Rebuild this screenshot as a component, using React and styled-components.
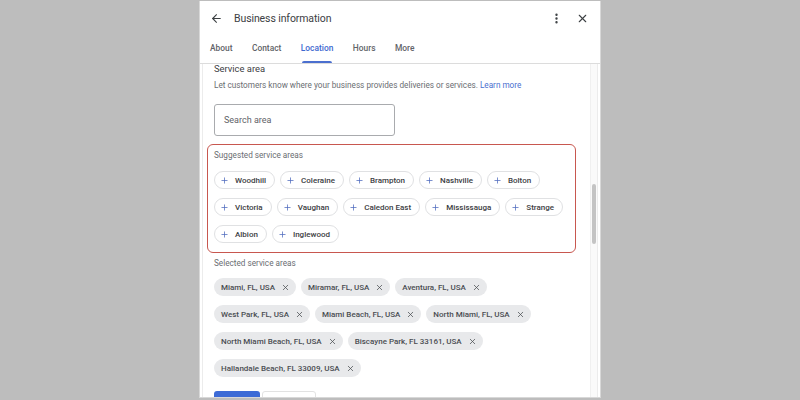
import styled, { createGlobalStyle } from "styled-components";
import { ArrowLeft, EllipsisVertical, X, Plus } from "lucide-react";

const GlobalStyle = createGlobalStyle`
  html, body {
    margin: 0;
    padding: 0;
    background: #bdbdbd;
    font-family: Roboto, "Noto Sans", Arial, sans-serif;
    height: 400px;
    overflow: hidden;
  }
`;

const suggested = [
  ["Woodhill", "Coleraine", "Brampton", "Nashville", "Bolton"],
  ["Victoria", "Vaughan", "Caledon East", "Mississauga", "Strange"],
  ["Albion", "Inglewood"],
];

const selected = [
  ["Miami, FL, USA", "Miramar, FL, USA", "Aventura, FL, USA"],
  ["West Park, FL, USA", "Miami Beach, FL, USA", "North Miami, FL, USA"],
  ["North Miami Beach, FL, USA", "Biscayne Park, FL 33161, USA"],
  ["Hallandale Beach, FL 33009, USA"],
];

const tabs = ["About", "Contact", "Location", "Hours", "More"];

function App() {
  return (
    <>
      <GlobalStyle />
      <Page>
        <Dialog>
          <Header>
            <IconButton>
              <ArrowLeft size={13} strokeWidth={2} />
            </IconButton>
            <Title>Business information</Title>
            <HeaderActions>
              <IconButton>
                <EllipsisVertical size={13} strokeWidth={2.4} />
              </IconButton>
              <IconButton>
                <X size={13} strokeWidth={2} />
              </IconButton>
            </HeaderActions>
          </Header>
          <Tabs>
            {tabs.map((t) => (
              <Tab key={t} $active={t === "Location"}>
                {t}
              </Tab>
            ))}
          </Tabs>
          <Body>
            <Content>
              <SectionTitle>Service area</SectionTitle>
              <Description>
                Let customers know where your business provides deliveries or services.{" "}
                <Link>Learn more</Link>
              </Description>
              <SearchBox>Search area</SearchBox>
              <Highlight>
                <Label>Suggested service areas</Label>
                <ChipRows>
                  {suggested.map((row, i) => (
                    <ChipRow key={i}>
                      {row.map((name) => (
                        <AddChip key={name}>
                          <Plus size={9} strokeWidth={2} color="#4f6bbd" />
                          {name}
                        </AddChip>
                      ))}
                    </ChipRow>
                  ))}
                </ChipRows>
              </Highlight>
              <SelectedLabel>Selected service areas</SelectedLabel>
              <ChipRows>
                {selected.map((row, i) => (
                  <ChipRow key={i}>
                    {row.map((name) => (
                      <SelectedChip key={name}>
                        {name}
                        <X size={9} strokeWidth={2} color="#4a4d52" />
                      </SelectedChip>
                    ))}
                  </ChipRow>
                ))}
              </ChipRows>
              <Footer>
                <PrimaryButton />
                <SecondaryButton />
              </Footer>
            </Content>
            <ScrollTrack>
              <ScrollThumb />
            </ScrollTrack>
          </Body>
        </Dialog>
      </Page>
    </>
  );
}

export default App;

const Page = styled.div`
  height: 400px;
  display: flex;
  justify-content: center;
  padding-top: 1px;
  box-sizing: border-box;
`;

const Dialog = styled.div`
  width: 402px;
  height: 397px;
  background: #fff;
  border: 1px solid #d8d8d8;
  border-top: none;
  display: flex;
  flex-direction: column;
  box-sizing: border-box;
  overflow: hidden;
`;

const Header = styled.div`
  height: 35px;
  display: flex;
  align-items: center;
  padding: 0 10px 0 8px;
  color: #3c4043;
`;

const IconButton = styled.div`
  width: 16px;
  height: 16px;
  display: flex;
  align-items: center;
  justify-content: center;
  color: #3c4043;
`;

const Title = styled.div`
  font-size: 10.5px;
  margin-left: 10px;
  color: #3c4043;
  letter-spacing: -0.1px;
`;

const HeaderActions = styled.div`
  margin-left: auto;
  display: flex;
  gap: 10px;
`;

const Tabs = styled.div`
  height: 27px;
  display: flex;
  align-items: stretch;
  padding-left: 10px;
  gap: 19.5px;
  border-bottom: 1px solid #dcdcdc;
`;

const Tab = styled.div`
  position: relative;
  display: flex;
  align-items: center;
  padding-bottom: 3px;
  font-size: 8.4px;
  font-weight: 500;
  color: ${(p) => (p.$active ? "#3d68d0" : "#5f6368")};

  &::after {
    content: "";
    display: ${(p) => (p.$active ? "block" : "none")};
    position: absolute;
    left: 1px;
    right: 1px;
    bottom: 0;
    height: 2px;
    border-radius: 2px 2px 0 0;
    background: #4b6fcf;
  }
`;

const Body = styled.div`
  position: relative;
  flex: 1;
  overflow: hidden;
  margin: 0 2px;
  border-left: 1px solid #ececec;
  border-right: 1px solid #ececec;
`;

const Content = styled.div`
  padding: 0 12px 0 11px;
  display: flex;
  flex-direction: column;
`;

const SectionTitle = styled.div`
  font-size: 9.4px;
  color: #3c4043;
  margin-top: -1px;
  line-height: 12px;
`;

const Description = styled.div`
  font-size: 8.2px;
  color: #6a6d72;
  margin-top: 5px;
  line-height: 10px;
`;

const Link = styled.span`
  color: #4a6fcf;
`;

const SearchBox = styled.div`
  margin-top: 14px;
  width: 181px;
  height: 32px;
  box-sizing: border-box;
  border: 1px solid #a9abae;
  border-radius: 3px;
  display: flex;
  align-items: center;
  padding-left: 9px;
  font-size: 9px;
  color: #5f6368;
`;

const Highlight = styled.div`
  margin: 8px 0 0 -7px;
  width: 369px;
  height: 109px;
  box-sizing: border-box;
  border: 1.5px solid #c8574f;
  border-radius: 6px;
  padding: 5px 0 0 6px;
`;

const Label = styled.div`
  font-size: 8.2px;
  color: #6a6d72;
  line-height: 10px;
  margin-bottom: 11px;
`;

const ChipRows = styled.div`
  display: flex;
  flex-direction: column;
  gap: 9px;
`;

const ChipRow = styled.div`
  display: flex;
  gap: 5px;
`;

const AddChip = styled.div`
  height: 18px;
  box-sizing: border-box;
  border: 1px solid #e0e1e3;
  border-radius: 9px;
  display: flex;
  align-items: center;
  gap: 6px;
  padding: 0 8px 0 5px;
  font-size: 8px;
  font-weight: 500;
  white-space: nowrap;
  color: #3c4043;
`;

const SelectedLabel = styled.div`
  font-size: 8.2px;
  color: #6a6d72;
  line-height: 10px;
  margin: 5px 0 10px;
`;

const SelectedChip = styled.div`
  height: 18px;
  box-sizing: border-box;
  border-radius: 9px;
  background: #e8e9eb;
  display: flex;
  align-items: center;
  gap: 6px;
  padding: 0 6px 0 7px;
  font-size: 8px;
  font-weight: 500;
  white-space: nowrap;
  color: #4a4d52;
`;

const Footer = styled.div`
  display: flex;
  gap: 2px;
  margin-top: 14px;
`;

const PrimaryButton = styled.div`
  width: 46px;
  height: 20px;
  border-radius: 3px;
  background: #3d6bd6;
`;

const SecondaryButton = styled.div`
  width: 54px;
  height: 20px;
  border-radius: 3px;
  border: 1px solid #e2e2e2;
  box-sizing: border-box;
`;

const ScrollTrack = styled.div`
  position: absolute;
  top: 0;
  right: 0;
  width: 6px;
  height: 100%;
  background: #fafafa;
  border-left: 1px solid #f0f0f0;
`;

const ScrollThumb = styled.div`
  margin: 120px 0 0 1px;
  width: 4px;
  height: 60px;
  border-radius: 2px;
  background: #c4c4c4;
`;
